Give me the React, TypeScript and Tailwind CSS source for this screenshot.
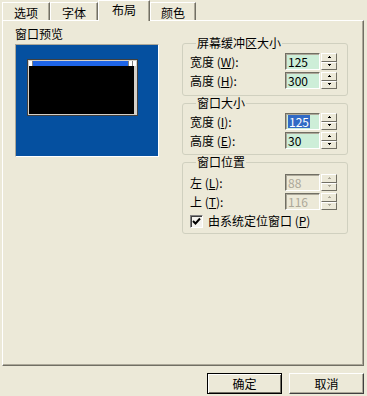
import React from "react";

const Tab = ({ label, active, w }: { label: string; active?: boolean; w: string }) => {
  if (active) {
    return (
      <div
        className={`${w} relative z-10 -mb-[1px] h-[21px] flex justify-center pt-[2px] bg-[#ece9d8] border-t border-l border-white border-r border-r-[#716f64] shadow-[inset_-1px_0_0_#aca899]`}
      >
        {label}
      </div>
    );
  }
  return (
    <div
      className={`${w} h-[18px] flex justify-center pt-[3px] bg-[#ece9d8] border-t border-l border-white border-r border-r-[#716f64] shadow-[inset_-1px_0_0_#aca899]`}
    >
      {label}
    </div>
  );
};

const Spinner = ({ disabled }: { disabled?: boolean }) => {
  const c = disabled ? "#aca899" : "#000";
  return (
    <div className="ml-[1px] w-[16px] h-[17px] flex flex-col">
      {[0, 1].map((i) => (
        <div
          key={i}
          className="flex-1 flex items-center justify-center bg-[#ece9d8] border-t border-l border-white border-r border-b border-r-[#716f64] border-b-[#716f64]"
        >
          <svg width="5" height="3" viewBox="0 0 5 3">
            {i === 0 ? <path d="M2 0h1v1h1v1H1V1h1z" fill={c} /> : <path d="M1 0h3v1H3v1H2V1H1z" fill={c} />}
          </svg>
        </div>
      ))}
    </div>
  );
};

const Field = ({
  label,
  k,
  value,
  disabled,
  selected,
}: {
  label: string;
  k: string;
  value: string;
  disabled?: boolean;
  selected?: boolean;
}) => (
  <div className="flex items-center h-[17px]">
    <div className="w-[95px] text-black">
      {label} (<span className="underline">{k}</span>):
    </div>
    <div
      className={`w-[35px] h-[17px] flex items-center pl-[2px] border-t border-l border-[#716f64] border-r border-b border-r-white border-b-white shadow-[inset_1px_1px_0_#aca899] ${
        disabled ? "bg-[#ece9d8] text-[#aca899]" : "bg-[#cdeed8] text-black"
      }`}
    >
      {selected ? <span className="bg-[#316ac5] text-white px-[1px] leading-[13px]">{value}</span> : value}
    </div>
    <Spinner disabled={disabled} />
  </div>
);

const Group = ({ title, className, children }: { title: string; className: string; children: React.ReactNode }) => (
  <fieldset className={`w-[166px] border border-[#d0d0bf] rounded-[3px] pl-[7px] ${className}`}>
    <legend className="ml-[6px] px-[1px] leading-[14px]">{title}</legend>
    <div className="flex flex-col gap-[2px]">{children}</div>
  </fieldset>
);

const Button = ({ label, primary }: { label: string; primary?: boolean }) => (
  <div
    className={`w-[75px] h-[21px] flex items-center justify-center bg-[#ece9d8] ${
      primary
        ? "border border-black shadow-[inset_1px_1px_0_#fff,inset_-1px_-1px_0_#716f64]"
        : "border-t border-l border-white border-r border-b border-r-[#404040] border-b-[#404040] shadow-[inset_-1px_-1px_0_#aca899]"
    }`}
  >
    {label}
  </div>
);

export default function App() {
  return (
    <div className="w-[367px] h-[396px] bg-[#ece9d8] text-[12px] leading-[14px] text-black font-['SimSun','Noto_Sans_CJK_SC',sans-serif] overflow-hidden">
      <div className="h-[20px] flex items-end pl-[2px]">
        <Tab label="选项" w="w-[48px]" />
        <Tab label="字体" w="w-[48px]" />
        <Tab label="布局" w="w-[52px]" active />
        <Tab label="颜色" w="w-[46px]" />
      </div>

      <div className="ml-[2px] w-[362px] h-[346px] flex border-t border-l border-white border-r border-b border-r-[#716f64] border-b-[#716f64] shadow-[inset_-1px_-1px_0_#aca899]">
        <div className="ml-[12px] pt-[6px] flex flex-col">
          <div>窗口预览</div>
          <div className="mt-[3px] w-[144px] h-[113px] bg-[#0550a0] border-t border-l border-[#aca899] border-r border-b border-r-white border-b-white pl-[11px] pt-[14px]">
            <div className="w-[111px] h-[57px] border border-[#404040] bg-[#d4d0c8] p-[1px] flex flex-col">
              <div className="h-[5px] flex">
                <div className="w-[4px] bg-white border-r border-[#808080]" />
                <div className="flex-1 bg-[#1e64e6]" />
                <div className="w-[4px] bg-white border-l border-[#808080]" />
                <div className="w-[4px] bg-white border-l border-[#808080]" />
              </div>
              <div className="flex-1 flex bg-black">
                <div className="flex-1" />
                <div className="w-[2px] bg-[#d4d0c8]" />
              </div>
            </div>
          </div>
        </div>

        <div className="ml-[23px] pt-[15px] flex flex-col">
          <Group title="屏幕缓冲区大小" className="pt-[3px] pb-[6px]">
            <Field label="宽度" k="W" value="125" />
            <Field label="高度" k="H" value="300" />
          </Group>
          <Group title="窗口大小" className="pt-[3px] pb-[5px]">
            <Field label="宽度" k="I" value="125" selected />
            <Field label="高度" k="E" value="30" />
          </Group>
          <Group title="窗口位置" className="pt-[5px] pb-[4px]">
            <Field label="左" k="L" value="88" disabled />
            <Field label="上" k="T" value="116" disabled />
            <div className="flex items-center h-[16px] mt-[1px]">
              <div className="w-[13px] h-[13px] bg-[#f4f3ee] border-t border-l border-[#808080] border-r border-b border-r-white border-b-white shadow-[inset_1px_1px_0_#404040] flex items-center justify-center">
                <svg width="9" height="9" viewBox="0 0 9 9">
                  <path d="M1 4l2.5 2.5L8 1.5" stroke="#000" strokeWidth="2" fill="none" />
                </svg>
              </div>
              <div className="ml-[5px]">
                由系统定位窗口 (<span className="underline">P</span>)
              </div>
            </div>
          </Group>
        </div>
      </div>

      <div className="mt-[7px] flex justify-end gap-[7px] pr-[3px]">
        <Button label="确定" primary />
        <Button label="取消" />
      </div>
    </div>
  );
}
